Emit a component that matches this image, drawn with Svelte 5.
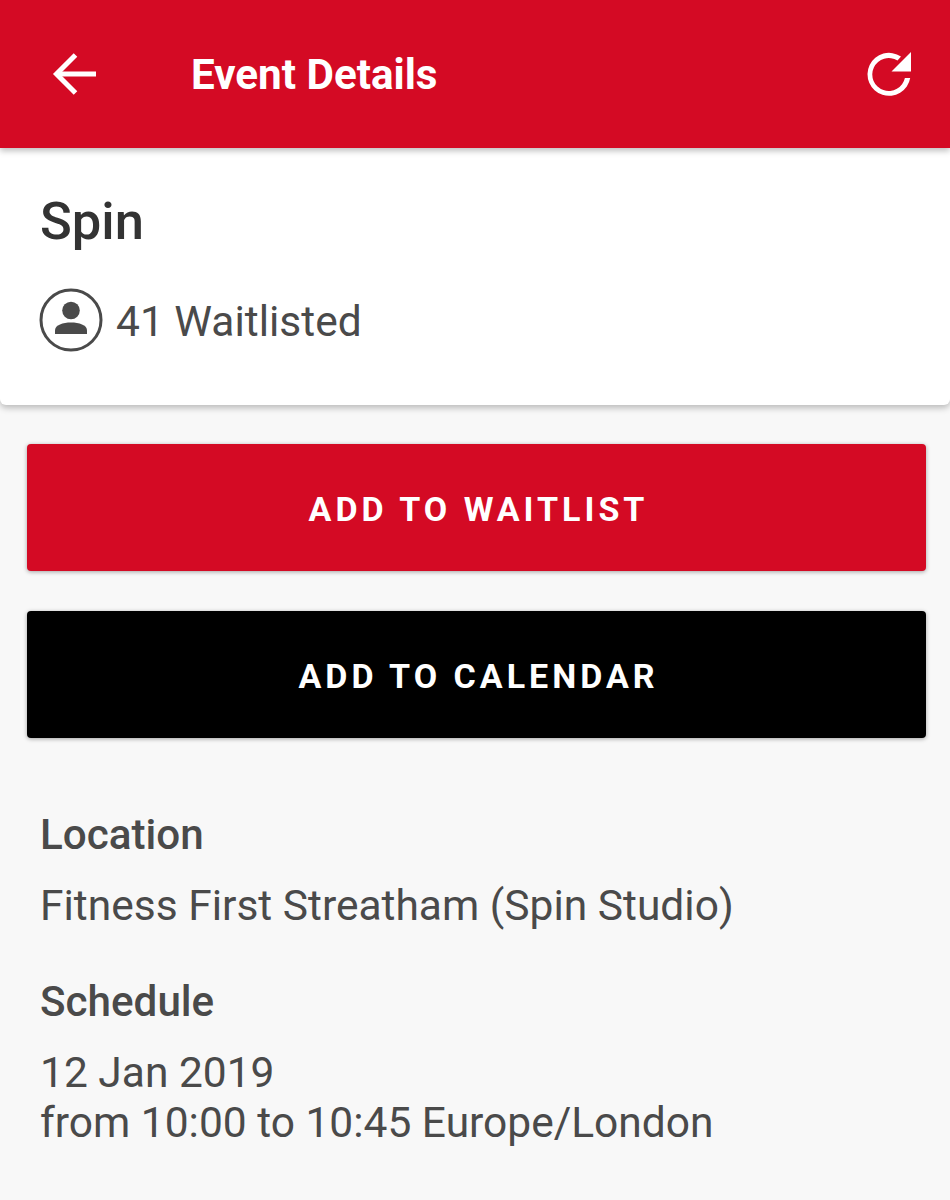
<script>
	let title = 'Event Details';
</script>

<div class="page">
	<header class="toolbar">
		<svg class="back" width="46" height="46" viewBox="0 0 46 46" fill="none" stroke="#fff" stroke-width="5">
			<path d="M44 23H4" />
			<path d="M23.5 4L4.5 23L23.5 42" />
		</svg>
		<h1>{title}</h1>
		<svg class="refresh" width="46" height="46" viewBox="0 0 46 46">
			<path d="M45.2 27A21.5 21.5 0 1 1 36 5.5L32.5 9.5A16.5 16.5 0 1 0 39.9 27Z" fill="#fff" />
			<path d="M46 1V20.5H26.5Z" fill="#fff" />
		</svg>
	</header>

	<section class="card">
		<h2>Spin</h2>
		<div class="status">
			<svg width="64" height="64" viewBox="0 0 64 64">
				<circle cx="32" cy="32" r="30" fill="none" stroke="#4a4a4a" stroke-width="3" />
				<circle cx="32" cy="22.5" r="8.8" fill="#4a4a4a" />
				<path d="M16 46V42.5C16 37 24 34.6 32 34.6S48 37 48 42.5V46Z" fill="#4a4a4a" />
			</svg>
			<span>41 Waitlisted</span>
		</div>
	</section>

	<div class="actions">
		<button class="primary">ADD TO WAITLIST</button>
		<button class="dark">ADD TO CALENDAR</button>
	</div>

	<section class="info">
		<h3>Location</h3>
		<p>Fitness First Streatham (Spin Studio)</p>
		<h3 class="second">Schedule</h3>
		<p>12 Jan 2019<br />from 10:00 to 10:45 Europe/London</p>
	</section>
</div>

<style>
	:global(body) {
		background: #f8f8f8;
	}
	.page {
		height: 1200px;
		overflow: hidden;
		background: #f8f8f8;
		font-family: Roboto, sans-serif;
		color: #4a4a4a;
	}
	.toolbar {
		position: relative;
		z-index: 2;
		display: flex;
		align-items: center;
		height: 148px;
		padding: 0 39px 0 52px;
		background: #d40a24;
		box-shadow: 0 3px 6px rgba(0, 0, 0, 0.25);
	}
	.back {
		margin-top: -1px;
	}
	h1 {
		flex: 1;
		margin: 0 0 0 93px;
		font-size: 42.2px;
		font-weight: 700;
		color: #fff;
	}
	.card {
		height: 257px;
		box-sizing: border-box;
		padding: 43px 40px 0;
		background: #fff;
		border-radius: 0 0 6px 6px;
		box-shadow: 0 3px 6px rgba(0, 0, 0, 0.25);
	}
	h2 {
		margin: 0 0 35px;
		font-size: 52.5px;
		line-height: 60px;
		font-weight: 500;
		color: #333;
	}
	.status {
		display: flex;
		align-items: center;
		gap: 13px;
		margin-left: -1px;
		font-size: 42.5px;
		line-height: 64px;
	}
	.status span {
		margin-top: 4px;
	}
	.actions {
		display: flex;
		flex-direction: column;
		gap: 40px;
		padding: 39px 24px 0 27px;
	}
	button {
		height: 127px;
		padding: 2px 0 0 4px;
		border: 0;
		border-radius: 4px;
		font-family: inherit;
		font-size: 34px;
		font-weight: 700;
		letter-spacing: 4px;
		color: #fff;
		box-shadow: 0 1px 4px rgba(0, 0, 0, 0.35);
	}
	.primary {
		background: #d40a24;
	}
	.dark {
		background: #000;
	}
	.info {
		padding: 72px 40px 0;
	}
	h3 {
		margin: 0;
		font-size: 42.2px;
		line-height: 50px;
		font-weight: 500;
	}
	.second {
		margin-top: 46px;
	}
	p {
		margin: 21px 0 0;
		font-size: 42.5px;
		line-height: 50px;
	}
</style>
